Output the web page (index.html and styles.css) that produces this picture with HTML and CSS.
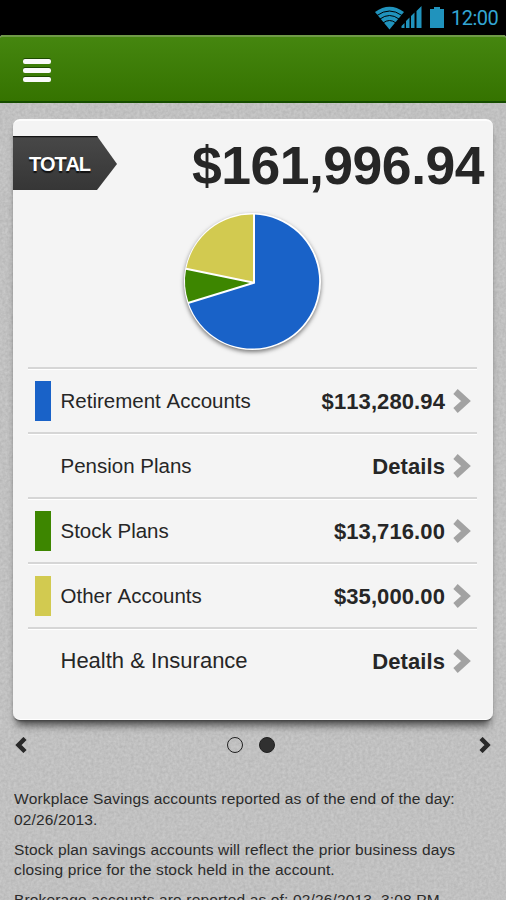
FILE: index.html
```html
<!DOCTYPE html>
<html lang="en">
<head>
    <meta charset="UTF-8">
    <title>Accounts</title>
    <link rel="stylesheet" href="styles.css">
</head>
<body>
<svg class="texture" width="506" height="900">
    <filter id="grain" x="0" y="0" width="100%" height="100%" color-interpolation-filters="sRGB">
        <feTurbulence type="fractalNoise" baseFrequency="0.35" numOctaves="2" seed="4"/>
        <feColorMatrix values="0.11 0 0 0 0.7  0.11 0 0 0 0.7  0.11 0 0 0 0.7  0 0 0 0 1"/>
    </filter>
    <rect width="506" height="900" filter="url(#grain)"/>
</svg>
<div class="status">
    <svg class="status-icons" width="70" height="24" viewBox="375 6 70 24">
        <path fill="#2093bd" d="M375 12Q389.500 1.500 404 12L389.500 29.500Z"/>
        <g fill="none" stroke="#000" stroke-width="1">
            <path d="M377 15.500Q389.500 6.500 402 15.500"/>
            <path d="M380 19Q389.500 12 399 19"/>
            <path d="M383 23Q389.500 18 396 23"/>
        </g>
        <path fill="#2093bd" d="M401.500 28v-2l3-3v5zM406 28v-7l3.500-3.500V28zM411 28V16l3.500-3.500V28zM416.500 28V11l5-5v22z"/>
        <path fill="#2093bd" d="M430 9h4V7h6v2h4v19h-14z"/>
    </svg>
    <span class="clock">12:00</span>
</div>
<div class="header">
    <div class="menu">
        <span></span>
        <span></span>
        <span></span>
    </div>
</div>
<div class="card">
    <div class="total">
        <svg class="tag" width="105" height="54">
            <defs>
                <linearGradient id="dark" x1="0" y1="0" x2="0" y2="1">
                    <stop offset="0" stop-color="#484848"/>
                    <stop offset="1" stop-color="#363636"/>
                </linearGradient>
            </defs>
            <path fill="url(#dark)" d="M0 0H84L104 28L84 54H0Z"/>
            <path fill="#151515" d="M0 0H84L85 1.300H0Z"/>
            <text class="tag-text" x="16" y="35" textLength="62">TOTAL</text>
        </svg>
        <span class="amount">$161,996.94</span>
    </div>
    <svg class="pie" width="160" height="160" viewBox="173 203 160 160">
        <circle class="pie-ring" cx="252.500" cy="281.500" r="68.500"/>
        <path fill="#1962c8" d="M254 282.700V214.600A67 67 0 1 1 188.600 302.800Z"/>
        <path fill="#3d8600" d="M254 282.700L188.600 302.800A67 67 0 0 1 186.100 269Z"/>
        <path fill="#d2ca50" d="M254 282.700L186.100 269A67 67 0 0 1 254 214.600Z"/>
        <path class="pie-lines" d="M254 214V282.700L188 303M254 282.700L186 268.800"/>
    </svg>
    <ul class="accounts">
        <li>
            <i class="swatch blue"></i>
            <span class="name">Retirement Accounts</span>
            <span class="value">$113,280.94</span>
            <svg class="arrow" width="18" height="24"><path d="M2.500 2.500L13 12L2.500 21.500"/></svg>
        </li>
        <li>
            <i class="swatch"></i>
            <span class="name">Pension Plans</span>
            <span class="value">Details</span>
            <svg class="arrow" width="18" height="24"><path d="M2.500 2.500L13 12L2.500 21.500"/></svg>
        </li>
        <li>
            <i class="swatch green"></i>
            <span class="name">Stock Plans</span>
            <span class="value">$13,716.00</span>
            <svg class="arrow" width="18" height="24"><path d="M2.500 2.500L13 12L2.500 21.500"/></svg>
        </li>
        <li>
            <i class="swatch yellow"></i>
            <span class="name">Other Accounts</span>
            <span class="value">$35,000.00</span>
            <svg class="arrow" width="18" height="24"><path d="M2.500 2.500L13 12L2.500 21.500"/></svg>
        </li>
        <li>
            <i class="swatch"></i>
            <span class="name large">Health &amp; Insurance</span>
            <span class="value">Details</span>
            <svg class="arrow" width="18" height="24"><path d="M2.500 2.500L13 12L2.500 21.500"/></svg>
        </li>
    </ul>
</div>
<div class="pager">
    <svg width="12" height="16"><path d="M10 1.500L3.500 8L10 14.500"/></svg>
    <div class="dots">
        <span></span>
        <span class="selected"></span>
    </div>
    <svg width="12" height="16"><path d="M2 1.500L8.500 8L2 14.500"/></svg>
</div>
<div class="notes">
    <p>Workplace Savings accounts reported as of the end of the day:<br>02/26/2013.</p>
    <p>Stock plan savings accounts will reflect the prior business days<br>closing price for the stock held in the account.</p>
    <p>Brokerage accounts are reported as of: 02/26/2013, 3:08 PM</p>
</div>
</body>
</html>
```
FILE: styles.css
```css
*{
    margin: 0;
    padding: 0;
    box-sizing: border-box;
}
body{
    position: relative;
    width: 506px;
    height: 900px;
    overflow: hidden;
    background: #bfbfbf;
    font-family: "Liberation Sans", Arial, sans-serif;
    font-kerning: none;
    color: #262626;
}
svg{
    display: block;
    flex: none;
}
.texture{
    position: absolute;
    top: 0;
    left: 0;
    z-index: -1;
}
.status{
    height: 35px;
    padding: 6px 8px 0 0;
    display: flex;
    justify-content: flex-end;
    background: #000;
}
.clock{
    width: 47px;
    margin-left: 6px;
    font: 20px/25px Roboto, sans-serif;
    letter-spacing: -0.5px;
    color: #33a5d3;
}
.header{
    height: 68px;
    padding: 24px 23px 0;
    background: linear-gradient(#45860f, #357300);
    border-top: 2px solid #6f9a48;
    border-bottom: 2px solid #164d00;
    border-radius: 3px 3px 0 0;
    box-shadow: 0 -4px 0 #000;
}
.menu{
    width: 28px;
    margin-top: -2px;
    display: flex;
    flex-direction: column;
    gap: 4px;
}
.menu span{
    height: 5px;
    border-radius: 2px;
    background: #fafafa;
    box-shadow: 0 -1px 0 #1d4a00;
}
.card{
    width: 480px;
    height: 601px;
    margin: 16px 0 0 13px;
    padding-top: 17px;
    background: #f4f4f4;
    border-top: 2px solid #fdfdfd;
    border-bottom: 1px solid #fff;
    border-radius: 7px;
    box-shadow: 0 9px 8px -4px #444, 0 2px 2px -1px #444;
}
.total{
    height: 56px;
    margin-top: -2px;
    display: flex;
    justify-content: space-between;
}
.tag-text{
    font-size: 20px;
    font-weight: bold;
    fill: #fff;
    text-shadow: 0 2px 1px #111;
}
.amount{
    padding-right: 9px;
    font-size: 53.500px;
    line-height: 59px;
    font-weight: bold;
    letter-spacing: -0.500px;
}
.pie{
    margin: 11px 0 0 160px;
}
.pie-ring{
    fill: #fff;
    filter: drop-shadow(0 2px 2px #777);
}
.pie-lines{
    fill: none;
    stroke: #fff;
    stroke-width: 2;
}
.accounts{
    width: 449px;
    margin: 4px 0 0 15px;
    list-style: none;
}
.accounts li{
    height: 64.900px;
    padding: 2px 6px 0 7px;
    display: flex;
    align-items: center;
    border-top: 2px solid #d6d6d6;
    box-shadow: inset 0 1px 0 #fff;
}
.swatch{
    width: 16px;
    height: 40px;
    margin-right: 9.500px;
}
.blue{
    background: #1962c8;
}
.green{
    background: #3d8600;
}
.yellow{
    background: #d2ca50;
}
.name{
    flex: 1;
    font-size: 20.500px;
}
.large{
    font-size: 22px;
}
.value{
    padding-top: 1px;
    font-size: 22px;
    font-weight: bold;
    letter-spacing: 0.100px;
}
.arrow{
    margin-left: 8px;
}
.arrow path{
    fill: none;
    stroke: #a2a2a2;
    stroke-width: 6.500;
}
.pager{
    height: 50px;
    padding: 0 15px;
    display: flex;
    align-items: center;
    justify-content: space-between;
}
.pager path{
    fill: none;
    stroke: #292929;
    stroke-width: 4.500;
}
.dots{
    display: flex;
    gap: 16px;
    margin-left: -4px;
}
.dots span{
    width: 16px;
    height: 16px;
    border: 1px solid #202020;
    border-radius: 50%;
}
.dots .selected{
    background: #303030;
}
.notes{
    padding: 19px 0 0 14px;
    font-size: 15.500px;
    line-height: 20.500px;
    letter-spacing: 0.150px;
    color: #2b2b2b;
    white-space: nowrap;
}
.notes p{
    margin-bottom: 9.500px;
}
```
